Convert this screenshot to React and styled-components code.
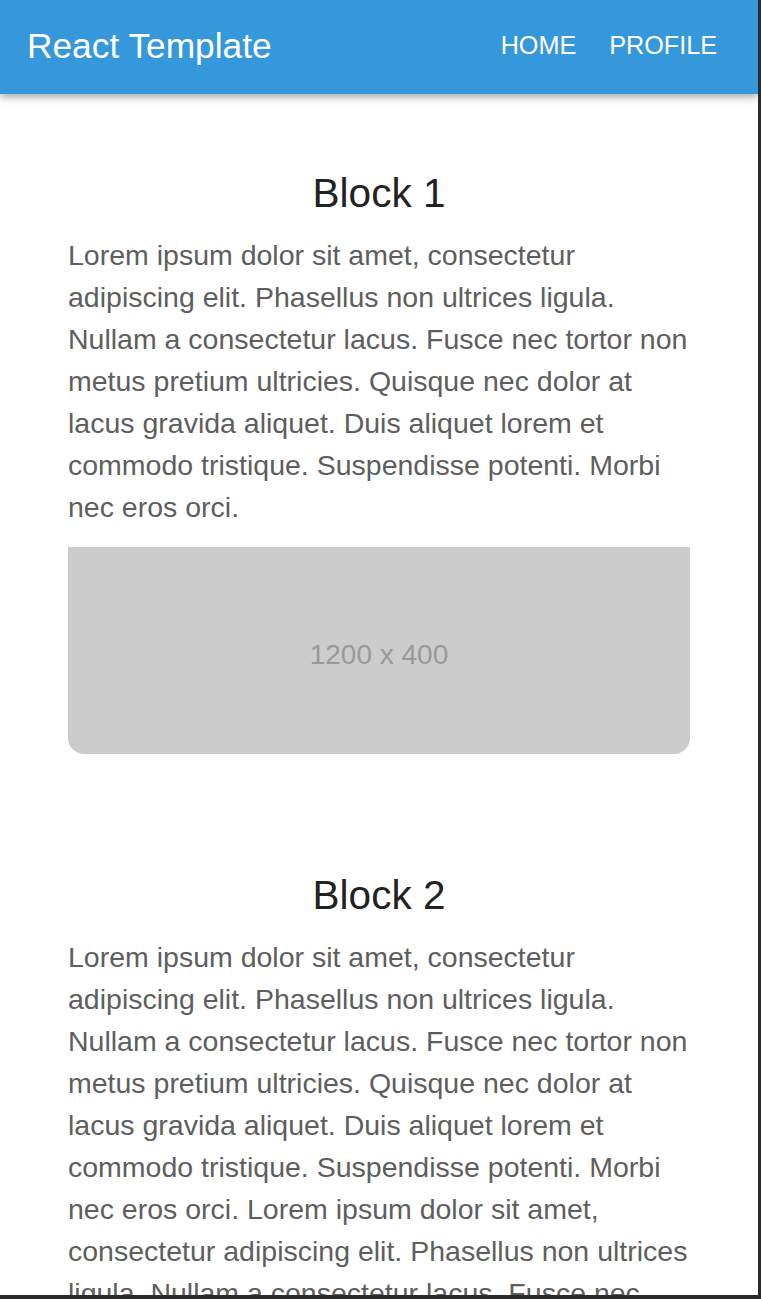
import React from 'react'
import styled, { createGlobalStyle } from 'styled-components'

const GlobalStyle = createGlobalStyle`
  html, body {
    margin: 0;
    padding: 0;
    background: #2b2b2b;
  }
  body {
    font-family: "Liberation Sans", Arial, sans-serif;
  }
`

const Frame = styled.div`
  width: 758px;
  height: 1295px;
  overflow: hidden;
  background: #fff;
`

const Header = styled.header`
  height: 94px;
  display: flex;
  align-items: center;
  justify-content: space-between;
  padding: 0 41px 0 27px;
  background: #3498db;
  box-shadow: 0 3px 8px rgba(0, 0, 0, 0.35);
  position: relative;
  z-index: 1;
`

const Brand = styled.div`
  color: #fff;
  font-size: 35.3px;
  margin-top: -3px;
`

const Nav = styled.nav`
  display: flex;
  gap: 33px;
  margin-top: -4px;

  > a {
    color: #fff;
    font-size: 25.2px;
    text-decoration: none;
    text-transform: uppercase;
  }
`

const Main = styled.main`
  padding: 0 68px;
`

const Block = styled.section`
  padding-top: 77px;
  padding-bottom: 42px;

  > h2 {
    margin: 0;
    text-align: center;
    font-size: 40.5px;
    font-weight: normal;
    line-height: 45px;
    color: #222;
  }
  > p {
    margin: 18px 0 0;
    font-size: 28.5px;
    line-height: 42px;
    color: #5e5e5e;
  }
`

const Placeholder = styled.div`
  margin-top: 19px;
  aspect-ratio: 3 / 1;
  display: flex;
  align-items: center;
  justify-content: center;
  padding-top: 8px;
  box-sizing: border-box;
  background: #cccccc;
  border-radius: 0 0 16px 16px;
  color: #999;
  font-size: 28px;
`

const lorem =
  'Lorem ipsum dolor sit amet, consectetur adipiscing elit. Phasellus non ultrices ligula. Nullam a consectetur lacus. Fusce nec tortor non metus pretium ultricies. Quisque nec dolor at lacus gravida aliquet. Duis aliquet lorem et commodo tristique. Suspendisse potenti. Morbi nec eros orci.'

const App = () => {
  return (
    <Frame>
      <GlobalStyle />
      <Header>
        <Brand>React Template</Brand>
        <Nav>
          <a href="#">Home</a>
          <a href="#">Profile</a>
        </Nav>
      </Header>
      <Main>
        <Block>
          <h2>Block 1</h2>
          <p>{lorem}</p>
          <Placeholder>1200 x 400</Placeholder>
        </Block>
        <Block>
          <h2>Block 2</h2>
          <p>
            {lorem} {lorem}
          </p>
          <Placeholder>1200 x 400</Placeholder>
        </Block>
      </Main>
    </Frame>
  )
}

export default App
